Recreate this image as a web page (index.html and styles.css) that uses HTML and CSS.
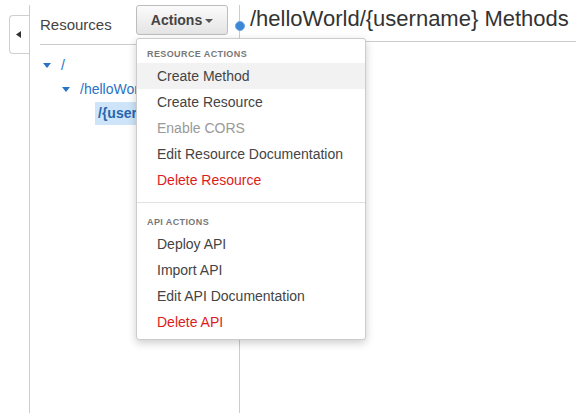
FILE: index.html
```html
<!DOCTYPE html>
<html>
    <head>
        <title>helloWorld | Resources</title>
        <link rel="stylesheet" href="styles.css">
    </head>
    <body>
        <div class="console">
            <div class="rail">
                <button class="collapse" title="Hide">
                    <svg width="5" height="7" viewBox="0 0 5 7"><path d="M5 0 L0 3.5 L5 7 Z" fill="#333"/></svg>
                </button>
            </div>

            <aside class="resources">
                <div class="resHead">
                    <span class="resTitle">Resources</span>
                    <div class="actions">
                        <button class="actionsBtn">Actions<span class="caret"></span></button>
                        <div class="menu">
                            <div class="menuHead">Resource Actions</div>
                            <a class="menuItem hover">Create Method</a>
                            <a class="menuItem">Create Resource</a>
                            <a class="menuItem disabled">Enable CORS</a>
                            <a class="menuItem">Edit Resource Documentation</a>
                            <a class="menuItem danger">Delete Resource</a>
                            <div class="menuSep"></div>
                            <div class="menuHead">API Actions</div>
                            <a class="menuItem">Deploy API</a>
                            <a class="menuItem">Import API</a>
                            <a class="menuItem">Edit API Documentation</a>
                            <a class="menuItem danger">Delete API</a>
                        </div>
                    </div>
                </div>
                <ul class="tree">
                    <li class="node lvl0"><span class="twisty"></span><a>/</a></li>
                    <li class="node lvl1"><span class="twisty"></span><a>/helloWorld</a></li>
                    <li class="node lvl2"><a class="selected">/{username}</a></li>
                </ul>
            </aside>

            <main class="methods">
                <div class="methodsHead">
                    <span class="dot"></span>
                    <h2 class="methodsTitle">/helloWorld/{username} Methods</h2>
                </div>
            </main>
        </div>
    </body>
</html>
```

FILE: styles.css
```css
body{
    margin: 0;
    padding: 0;
    font-family: "Liberation Sans", Arial, sans-serif;
    color: #444;
    background-color: #ffffff;
}

.console{
    display: flex;
    margin-top: 5px;
    height: 408px;
}

/* collapse tab on the far left */
.rail{
    width: 29px;
    padding-top: 10px;
    box-sizing: border-box;
}

.collapse{
    display: flex;
    align-items: center;
    justify-content: center;
    margin-left: 9px;
    width: 20px;
    height: 39px;
    padding: 0 2px 0 0;
    background-color: #ffffff;
    border: 1px solid #cfcfcf;
    border-right: none;
    border-radius: 4px 0 0 4px;
}

.resources{
    width: 211px;
    box-sizing: border-box;
    border-left: 1px solid #cccccc;
    border-right: 1px solid #cccccc;
}

.resHead{
    display: flex;
    justify-content: space-between;
    align-items: flex-start;
    height: 39px;
    margin: 0 11px 0 10px;
    border-bottom: 1px solid #cccccc;
}

.resTitle{
    margin-top: 10px;
    font-size: 15px;
    line-height: 20px;
    color: #444;
}

.actions{
    position: relative;
}

.actionsBtn{
    display: flex;
    align-items: center;
    justify-content: center;
    width: 92px;
    height: 30px;
    padding: 0;
    font-family: "Liberation Sans", Arial, sans-serif;
    font-size: 14px;
    font-weight: bold;
    color: #444;
    background: linear-gradient(#fbfbfb, #e4e4e4);
    border: 1px solid #bdbdbd;
    border-radius: 3px;
}

.caret{
    margin-left: 3px;
    margin-top: 1px;
    border-top: 4px solid #555;
    border-left: 4px solid transparent;
    border-right: 4px solid transparent;
}

/* dropdown hanging off the Actions button */
.menu{
    position: absolute;
    top: 33px;
    left: 0;
    z-index: 2;
    width: 230px;
    box-sizing: border-box;
    padding-bottom: 4px;
    background-color: #ffffff;
    border: 1px solid #cccccc;
    border-radius: 3px;
    box-shadow: 0 3px 8px rgba(0, 0, 0, 0.2);
}

.menuHead{
    padding: 9px 10px 3px;
    font-size: 9px;
    line-height: 12px;
    font-weight: bold;
    letter-spacing: 0.4px;
    text-transform: uppercase;
    color: #777;
}

.menuItem{
    display: block;
    padding-left: 20px;
    font-size: 14px;
    line-height: 26px;
    color: #444;
}

.menuItem.hover{
    background-color: #f2f2f2;
}

.menuItem.disabled{
    color: #999;
}

.menuItem.danger{
    color: #dd1c1c;
}

.menuSep{
    margin: 9px 0 4px;
    border-top: 1px solid #e1e1e1;
}

/* resource tree */
.tree{
    list-style: none;
    margin: 0;
    padding: 8px 0 0;
}

.node{
    display: flex;
    align-items: center;
    height: 24px;
    font-size: 14px;
    color: #2a72c4;
}

.lvl0{
    padding-left: 13px;
}

.lvl1{
    padding-left: 32px;
}

.lvl2{
    padding-left: 65px;
}

.twisty{
    width: 0;
    height: 0;
    margin-right: 10px;
    border-top: 5px solid #2a72c4;
    border-left: 4.5px solid transparent;
    border-right: 4.5px solid transparent;
}

.selected{
    display: block;
    padding: 0 6px 0 3px;
    line-height: 23px;
    font-weight: bold;
    color: #2767ad;
    background-color: #cde4f9;
}

.methods{
    position: relative;
    flex: 1;
}

.methodsHead{
    height: 36px;
    padding-left: 10px;
    border-bottom: 1px solid #cccccc;
}

.dot{
    position: absolute;
    left: -5px;
    top: 16px;
    width: 8px;
    height: 8px;
    background-color: #3c86d6;
    border: 1px solid #6aa5e4;
    border-radius: 50%;
}

.methodsTitle{
    margin: 0;
    font-size: 22px;
    line-height: 28px;
    font-weight: normal;
    color: #333;
    white-space: nowrap;
}
```
